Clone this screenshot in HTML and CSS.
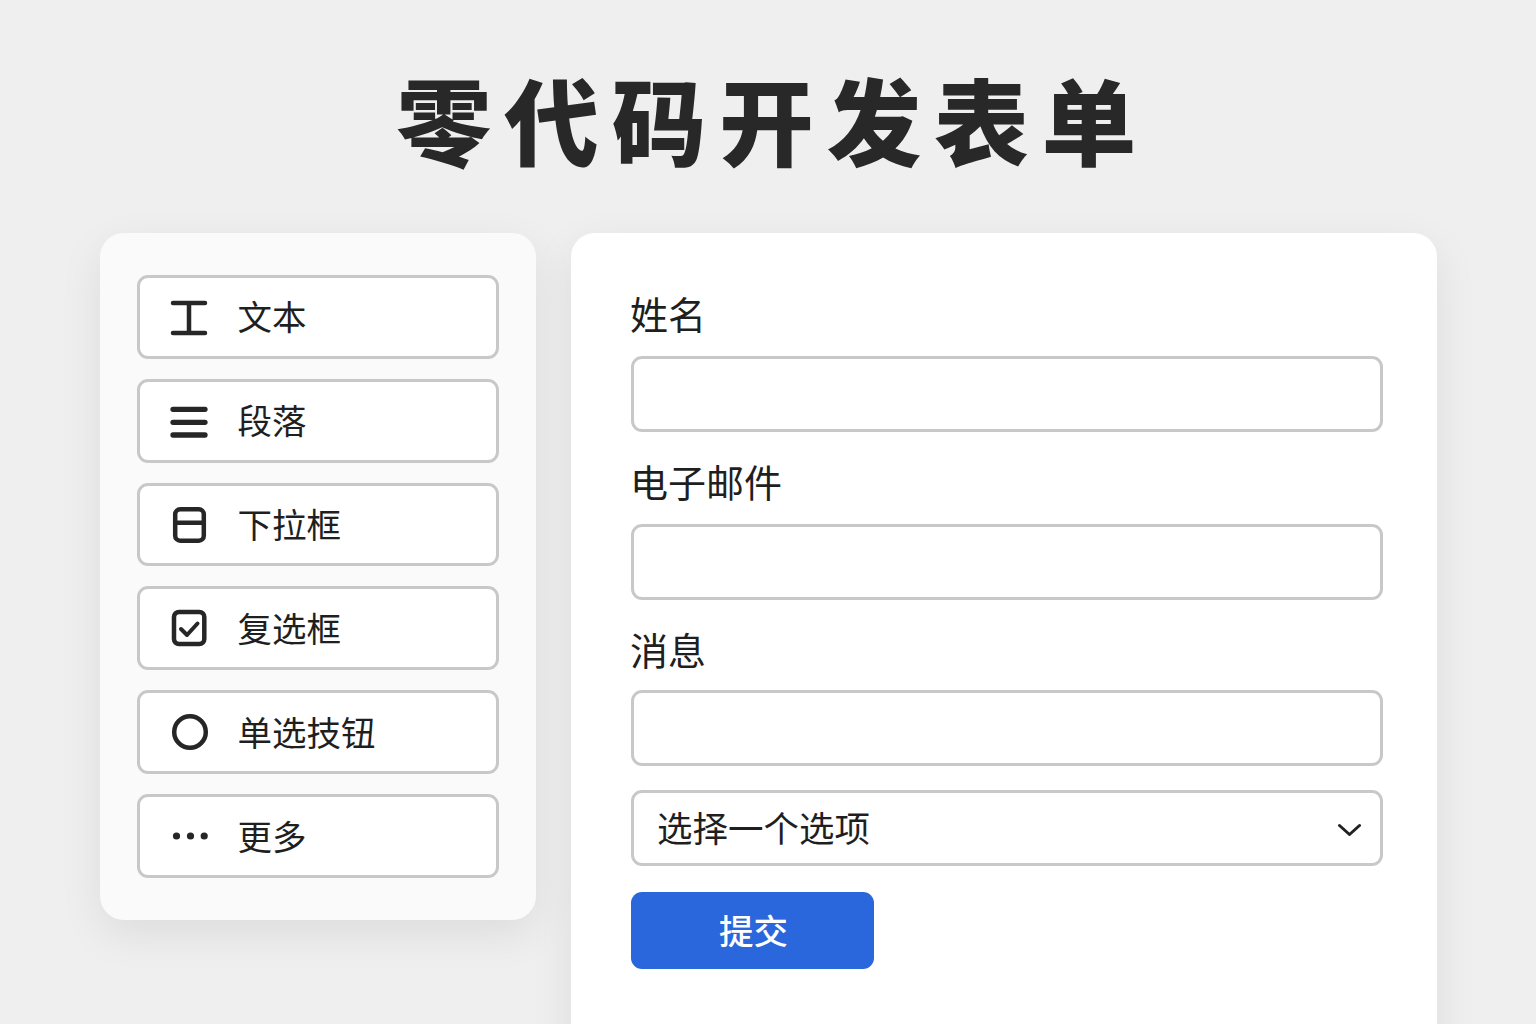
FILE: index.html
```html
<!DOCTYPE html>
<html lang="zh-CN">
<head>
<meta charset="utf-8">
<title>零代码开发表单</title>
<link rel="stylesheet" href="styles.css">
</head>
<body>
<h1 class="title">零代码开发表单</h1>
<div class="layout">
  <aside class="palette">
    <div class="tool">
      <svg class="tool-icon" viewBox="0 0 40 40"><path d="M3 6H35M19 6V36M3 36H35" class="st"/></svg>
      <span class="tool-label">文本</span>
    </div>
    <div class="tool">
      <svg class="tool-icon" viewBox="0 0 40 40"><path d="M3 8.300H35M3 21.300H35M3 34H35" class="st thick"/></svg>
      <span class="tool-label">段落</span>
    </div>
    <div class="tool">
      <svg class="tool-icon" viewBox="0 0 40 40"><rect x="5.200" y="4.300" width="28.600" height="31.400" rx="5" class="st"/><path d="M5.200 17.700H33.800" class="st"/></svg>
      <span class="tool-label">下拉框</span>
    </div>
    <div class="tool">
      <svg class="tool-icon" viewBox="0 0 40 40"><rect x="4" y="4" width="30.300" height="32" rx="5" class="st"/><path d="M11 21L17 27L27.500 15.500" class="st thin"/></svg>
      <span class="tool-label">复选框</span>
    </div>
    <div class="tool">
      <svg class="tool-icon" viewBox="0 0 40 40"><circle cx="20" cy="20" r="15.800" class="st"/></svg>
      <span class="tool-label">单选技钮</span>
    </div>
    <div class="tool">
      <svg class="tool-icon" viewBox="0 0 40 40"><circle cx="6.500" cy="20" r="3.600" class="dot"/><circle cx="20.500" cy="20" r="3.600" class="dot"/><circle cx="34.200" cy="20" r="3.600" class="dot"/></svg>
      <span class="tool-label">更多</span>
    </div>
  </aside>
  <main class="form">
    <label class="field-label">姓名</label>
    <div class="input"></div>
    <label class="field-label">电子邮件</label>
    <div class="input"></div>
    <label class="field-label field-label-tight">消息</label>
    <div class="input input-last"></div>
    <div class="input select">
      <span class="select-text">选择一个选项</span>
      <svg class="chevron" viewBox="0 0 26 16"><path d="M4.500 5.500L14.500 14.500L24.500 5.500"/></svg>
    </div>
    <div class="submit">提交</div>
  </main>
</div>
</body>
</html>
```
FILE: styles.css
```css
* { box-sizing: border-box; }
html, body { margin: 0; height: 1024px; overflow: hidden; }
body {
  background: #efefef;
  font-family: "Noto Sans CJK SC", "Noto Sans", sans-serif;
  color: #222;
}
.title {
  margin: 0;
  height: 233px;
  padding: 50px 0 0 10px;
  text-align: center;
  font-size: 94.500px;
  line-height: 136px;
  font-weight: 900;
  letter-spacing: 13px;
  color: #282828;
}
.layout {
  display: flex;
  gap: 35px;
  align-items: flex-start;
  padding-left: 100px;
}
.palette {
  width: 436px;
  height: 687px;
  padding: 42px 37px;
  background: #fafafa;
  border-radius: 24px;
  display: flex;
  flex-direction: column;
  gap: 20px;
  box-shadow: 0 14px 44px rgba(0, 0, 0, 0.08);
}
.tool {
  height: 84px;
  display: flex;
  align-items: center;
  gap: 28px;
  padding-left: 29.500px;
  background: #fff;
  border: 3px solid #c8c8c8;
  border-radius: 11px;
}
.tool-icon { width: 40px; height: 40px; flex: none; }
.st { fill: none; stroke: #262626; stroke-width: 4.500; stroke-linecap: round; stroke-linejoin: round; }
.thick { stroke-width: 5.300; }
.thin { stroke-width: 4; }
.dot { fill: #262626; }
.tool-label { font-size: 34.500px; line-height: 46px; padding-bottom: 3px; color: #1f1f1f; }
.form {
  width: 866px;
  height: 860px;
  padding: 59px 54px 0 59.500px;
  background: #fff;
  border-radius: 24px;
  display: flex;
  flex-direction: column;
  box-shadow: 0 14px 44px rgba(0, 0, 0, 0.08);
}
.field-label {
  font-size: 38px;
  line-height: 42px;
  height: 46px;
  margin-bottom: 18px;
  margin-left: -0.500px;
  color: #1f1f1f;
}
.field-label-tight { margin-bottom: 16px; }
.input {
  height: 76px;
  flex: none;
  margin-bottom: 28px;
  background: #fff;
  border: 3px solid #c8c8c8;
  border-radius: 11px;
}
.input-last { margin-bottom: 24px; }
.select {
  display: flex;
  align-items: center;
  justify-content: space-between;
  padding: 0 19px 0 23.500px;
  margin-bottom: 26px;
}
.select-text {
  font-size: 35.500px;
  padding-bottom: 3px;
  color: #1f1f1f;
}
.chevron { width: 26px; height: 16px; fill: none; stroke: #222; stroke-width: 3; stroke-linecap: round; stroke-linejoin: round; }
.submit {
  width: 243px;
  height: 77px;
  padding: 0 0 3px 3px;
  background: #2a66dc;
  border-radius: 11px;
  color: #fff;
  font-size: 34.500px;
  font-weight: 500;
  display: flex;
  align-items: center;
  justify-content: center;
}
```
